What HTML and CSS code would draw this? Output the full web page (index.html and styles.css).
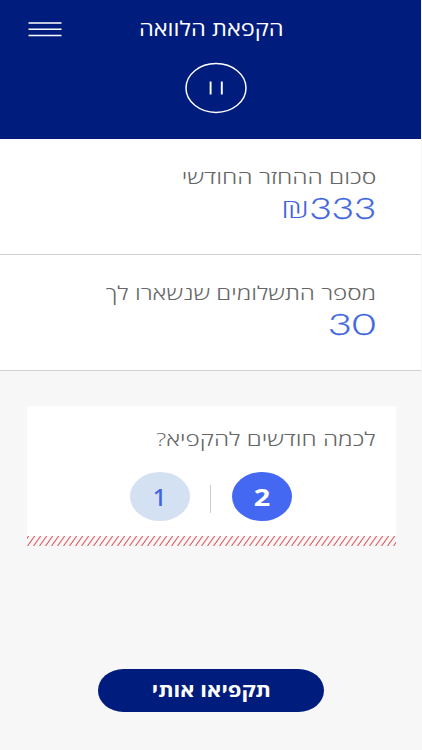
FILE: index.html
```html
<!DOCTYPE html>
<html lang="he" dir="rtl">
<head>
<meta charset="utf-8">
<title>הקפאת הלוואה</title>
<link rel="stylesheet" href="styles.css">
</head>
<body>
<main class="screen">
  <header class="header">
    <div class="bar">
      <svg class="menu" viewBox="0 0 34 16" fill="none" stroke="#fff" stroke-width="1.5"><path d="M0.5 2H33.5M0.5 8.3H33.5M0.5 14.6H33.5"/></svg>
      <h1 class="title"><span class="wide wide-title">הקפאת הלוואה</span></h1>
    </div>
    <svg class="pause" viewBox="0 0 62 52" fill="none" stroke="#fff"><ellipse cx="31" cy="26" rx="30" ry="24.4" stroke-width="1.5"/><path d="M25.6 19.5V32.5M36.8 19.5V32.5" stroke-width="1.9"/></svg>
  </header>
  <section class="row">
    <p class="label"><span class="wide wide-monthly">סכום ההחזר החודשי</span></p>
    <p class="value"><span class="wide wide-amount">333</span><span class="shekel">₪</span></p>
  </section>
  <section class="row">
    <p class="label"><span class="wide wide-payments">מספר התשלומים שנשארו לך</span></p>
    <p class="value"><span class="wide wide-count">30</span></p>
  </section>
  <section class="card">
    <p class="label question"><span class="wide wide-question">לכמה חודשים להקפיא?</span></p>
    <div class="choices">
      <button class="choice selected"><span class="wide wide-two">2</span></button>
      <span class="divider"></span>
      <button class="choice">1</button>
    </div>
    <svg class="stripes" width="369" height="10">
      <defs><pattern id="hatch" width="6" height="10" patternUnits="userSpaceOnUse"><path d="M-11.5 10L-4.3 0M-5.5 10L1.7 0M0.5 10L7.7 0" stroke="#e0565b" stroke-width="1.1"/></pattern></defs>
      <rect width="369" height="10" fill="url(#hatch)"/>
    </svg>
  </section>
  <button class="submit"><span class="wide wide-submit">תקפיאו אותי</span></button>
</main>
</body>
</html>
```
FILE: styles.css
```css
* { box-sizing: border-box; }
body { margin: 0; background: #fff; font-family: "Open Sans", "DejaVu Sans", sans-serif; }
h1, p { margin: 0; }
button { border: 0; padding: 0; font-family: inherit; }
svg { display: block; flex: none; }
.screen { width: 422px; height: 750px; border-right: 1px solid #f7f7f7; background: #f7f7f7; display: flex; flex-direction: column; overflow: hidden; }
.header { height: 139px; flex: none; background: #001c7c; color: #fff; display: flex; flex-direction: column; align-items: center; }
.bar { width: 100%; height: 58px; display: grid; grid-template-columns: 138px 1fr 138px; direction: ltr; align-items: center; }
.menu { width: 34px; height: 16px; margin-left: 28px; }
.title { direction: rtl; font-size: 20px; font-weight: 400; line-height: 28px; }
.wide { display: inline-block; white-space: nowrap; transform-origin: right center; }
.wide-title { transform: translateX(1px) scaleX(1.18); }
.pause { width: 62px; height: 52px; margin: 4px -10px 0 0; }
.row { height: 116px; flex: none; background: #fff; border-bottom: 1px solid #d2d2d2; padding: 24px 45px 0 0; }
.label { font-size: 19px; font-weight: 300; line-height: 28px; color: #666; }
.wide-monthly { transform: scaleX(1.295); }
.wide-payments { transform: scaleX(1.275); }
.wide-question { transform: scaleX(1.28); }
.value { display: flex; align-items: center; height: 32px; font-family: Lato, sans-serif; font-size: 30px; font-weight: 300; line-height: 32px; color: #4065e0; -webkit-text-stroke: 0.35px #4065e0; }
.wide-amount { transform: scaleX(1.28); }
.wide-count { transform: scaleX(1.37); }
.shekel { width: 26px; margin-right: 16px; padding-top: 3px; font-family: "Open Sans", sans-serif; font-size: 24px; display: flex; justify-content: center; transform: scaleX(1.65); -webkit-text-stroke: 0; }
.card { width: 369px; height: 140px; margin: 35px 25px 0 0; flex: none; display: flex; flex-direction: column; border-radius: 2px; background: linear-gradient(#fff 130px, #f7f7f7 130px); }
.question { padding: 19px 20px 0 0; height: 66px; }
.choices { height: 64px; display: flex; justify-content: center; align-items: flex-start; gap: 20.5px; padding-right: 2px; }
.choice { width: 60px; height: 49px; border-radius: 50%; background: #d4e1f3; color: #4065e0; font: 500 24px/49px "Noto Sans", sans-serif; }
.selected { background: #4468f2; color: #fff; font-weight: 700; }
.wide-two { transform: scaleX(1.2); transform-origin: center; }
.divider { width: 1px; height: 28px; margin-top: 13px; background: #ccc; }
.submit { width: 226px; height: 43px; margin: 123px 97px 0 0; flex: none; border-radius: 26px / 22px; background: #001c7c; color: #fff; font-size: 19px; font-weight: 700; line-height: 43px; }
.wide-submit { transform: scaleX(1.16); transform-origin: center; }
```
